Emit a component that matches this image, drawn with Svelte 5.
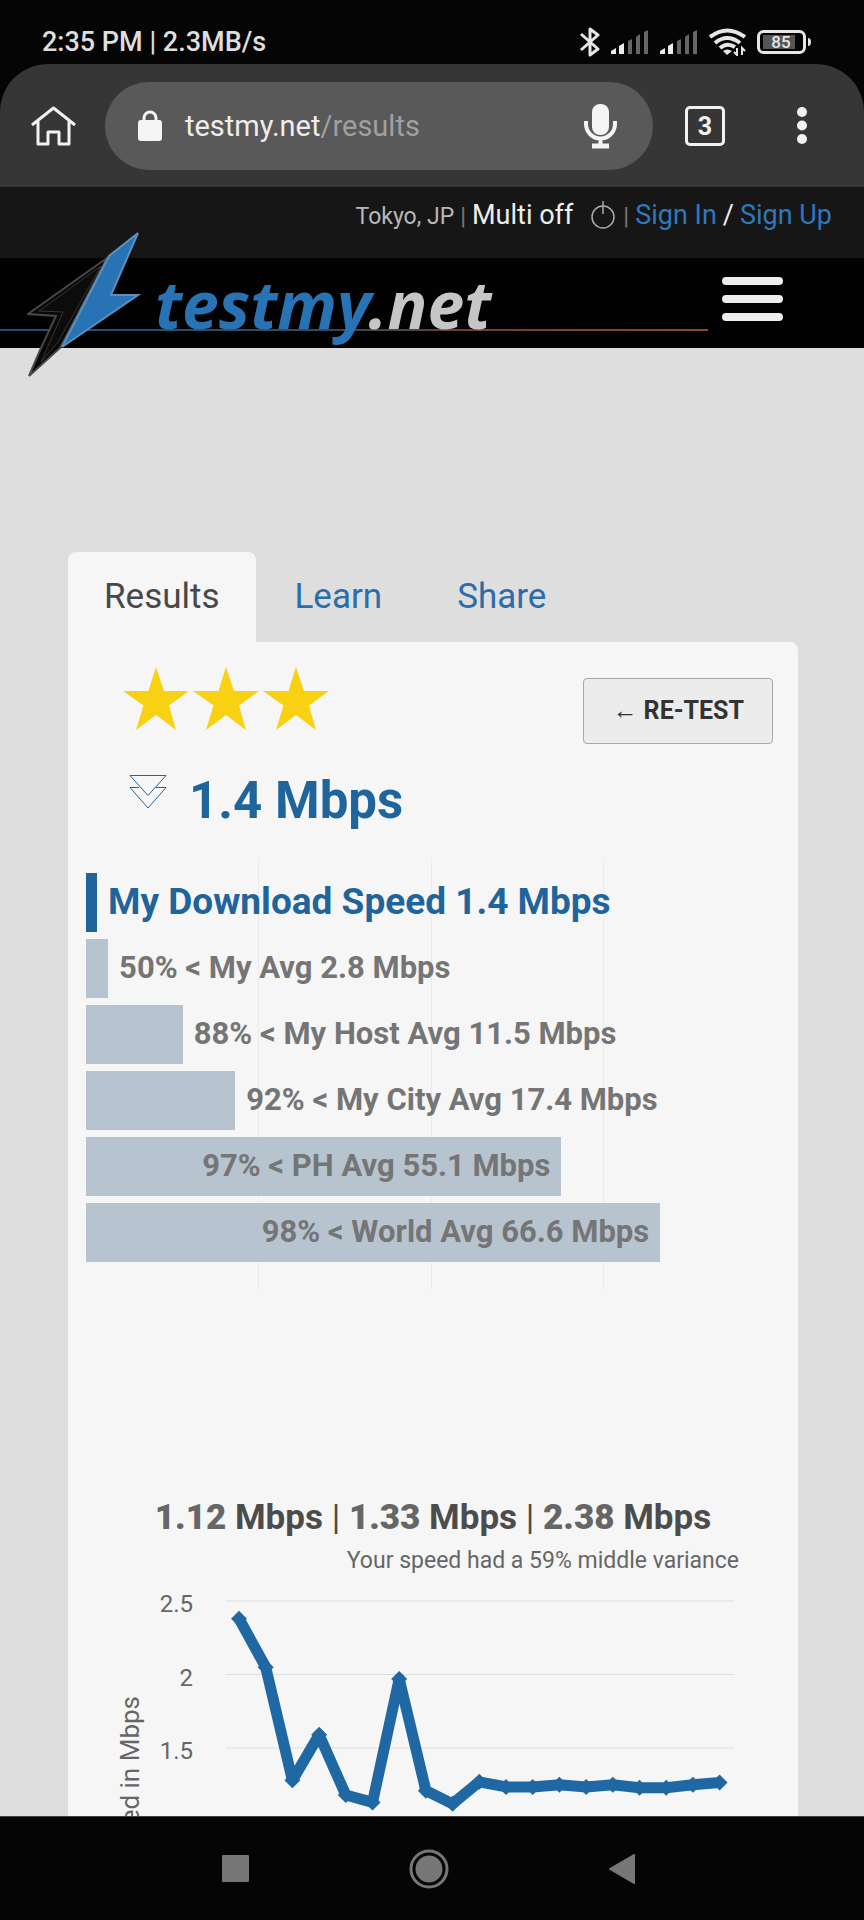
<script lang="ts">
  interface Bar {
    label: string;
    width: number;
    mine?: boolean;
    inside?: boolean;
  }

  const tabs = ['Results', 'Learn', 'Share'];
  let active = $state('Results');

  const bars: Bar[] = [
    { label: 'My Download Speed 1.4 Mbps', width: 1.6, mine: true },
    { label: '50% < My Avg 2.8 Mbps', width: 3.2 },
    { label: '88% < My Host Avg 11.5 Mbps', width: 14 },
    { label: '92% < My City Avg 17.4 Mbps', width: 21.6 },
    { label: '97% < PH Avg 55.1 Mbps', width: 68.8, inside: true },
    { label: '98% < World Avg 66.6 Mbps', width: 83.1, inside: true }
  ];

  const speeds = [
    2.38, 2.05, 1.28, 1.59, 1.18, 1.13, 1.97, 1.21, 1.12, 1.27, 1.235, 1.235, 1.25, 1.235, 1.25, 1.23, 1.23, 1.25,
    1.265
  ];
  const ticks = [2.5, 2, 1.5, 1];

  // plot coordinates inside the svg viewBox
  const px = (i: number) => 171 + i * 26.7;
  const py = (v: number) => 24 + (2.5 - v) * 147;

  const points = speeds.map((v, i) => ({ x: px(i), y: py(v) }));
  const line = points.map((p) => `${p.x},${p.y}`).join(' ');
</script>

{#snippet signal()}
  <svg width="38" height="26" viewBox="0 0 38 26" aria-hidden="true">
    <path d="M0 25V22L5 19V25ZM8 25V17L13 14V25Z" fill="#ededed" />
    <path d="M17 25V12L21 10V25ZM25 25V8L29 5V25ZM33 25V3L37 1V25Z" fill="#666" />
  </svg>
{/snippet}

<div class="phone">
  <header class="status">
    <span>2:35 PM | 2.3MB/s</span>
    <div class="status-icons">
      <svg width="20" height="32" viewBox="0 0 20 32" fill="none" stroke="#e6e6e6" stroke-width="3" aria-hidden="true">
        <path d="M1 8L18 23L10 29V3L18 9L1 24" stroke-linejoin="round" />
      </svg>
      {@render signal()}
      {@render signal()}
      <svg width="37" height="28" viewBox="0 0 37 28" fill="none" stroke="#e6e6e6" stroke-width="4" aria-hidden="true">
        <path d="M1 9Q18 -4 36 9M6 15Q18 5 31 15M11 20Q18 14 26 19" />
        <path d="M14 23Q18 20 23 23L18 27Z" fill="#e6e6e6" stroke="none" />
        <path d="M28 20V27L25 24M33 27V20L36 23" stroke-width="2" />
      </svg>
      <svg width="54" height="24" viewBox="0 0 54 24" aria-label="Battery 85%">
        <rect x="1.5" y="1.5" width="46" height="21" rx="5" fill="none" stroke="#e6e6e6" stroke-width="3" />
        <rect x="6" y="5" width="32" height="14" fill="#555" />
        <path d="M51 8Q54 8 54 12Q54 16 51 16Z" fill="#e6e6e6" />
        <text x="24" y="18" text-anchor="middle" class="charge">85</text>
      </svg>
    </div>
  </header>

  <div class="browser">
    <button class="plain" aria-label="Home">
      <svg width="45" height="40" viewBox="0 0 45 40" fill="none" stroke="#f2f2f2" stroke-width="3">
        <path d="M1 19L22.500 2L44 19M7 15V38H17V26H28V38H38V15" stroke-linejoin="round" />
      </svg>
    </button>
    <div class="omnibox">
      <svg width="24" height="32" viewBox="0 0 24 32" aria-hidden="true">
        <rect y="10" width="24" height="21" rx="3" fill="#f5f5f5" />
        <path d="M6 12V8A6 6 0 0 1 18 8V12" fill="none" stroke="#f5f5f5" stroke-width="3" />
      </svg>
      <button class="plain url">testmy.net<span>/results</span></button>
      <button class="plain" aria-label="Voice search">
        <svg width="33" height="46" viewBox="0 0 33 46" fill="none" stroke="#f5f5f5">
          <rect x="8" y="1" width="17" height="31" rx="8" fill="#f5f5f5" stroke="none" />
          <path d="M2 18V21A14.500 14.500 0 0 0 31 21V18M16.500 35V43" stroke-width="4" />
          <path d="M8 43H25" stroke-width="5" />
        </svg>
      </button>
    </div>
    <button class="count" aria-label="3 open tabs">3</button>
    <button class="plain more" aria-label="More">
      <svg width="10" height="38" viewBox="0 0 10 38" fill="#f2f2f2">
        <circle cx="5" cy="5" r="5" /><circle cx="5" cy="18.500" r="5" /><circle cx="5" cy="32" r="5" />
      </svg>
    </button>
  </div>

  <main class="site">
    <div class="account">
      <small>Tokyo, JP</small>
      <i>|</i>
      <span>Multi off</span>
      <button class="plain power" aria-label="Toggle multithread">
        <svg width="24" height="28" viewBox="0 0 24 28" fill="none" stroke="#aaa" stroke-width="1.500">
          <circle cx="12" cy="16" r="11" />
          <path d="M12 0V13" />
        </svg>
      </button>
      <i>|</i>
      <a href="#signin">Sign In</a>
      <span>/</span>
      <a href="#signup">Sign Up</a>
    </div>

    <nav class="masthead">
      <svg class="bolt" width="114" height="148" viewBox="0 0 114 148" aria-hidden="true">
        <path d="M80 28L1 84L29 86L14 118L2 146L33 118Z" fill="#080808" stroke="#484848" stroke-width="2" />
        <path d="M74 36L12 81L36 82L14 132L31 112Z" fill="#0c0c0c" stroke="#3a3434" stroke-width="1" />
        <path d="M111 3L82 26L35 117L111 65H84Z" fill="#2773b3" stroke="#5c8fbd" stroke-width="2" />
      </svg>
      <a class="logo" href="#home">testmy<span>.net</span></a>
      <button class="plain menu" aria-label="Menu">
        <span></span><span></span><span></span>
      </button>
    </nav>

    <div class="content">
      <div class="tabs" role="tablist">
        {#each tabs as tab}
          <button class="tab" role="tab" class:active={tab === active} aria-selected={tab === active} onclick={() => (active = tab)}>
            {tab}
          </button>
        {/each}
      </div>

      <section class="panel">
        <div class="head">
          <div class="stars" role="img" aria-label="3 stars">
            {#each [1, 2, 3] as n (n)}
              <svg width="66" height="63" viewBox="0 0 66 63">
                <path d="M33 0L41 24H66L46 38.500L53 63L33 48L13 63L20.500 38.500L0 24H25.500Z" fill="#f7d112" />
              </svg>
            {/each}
          </div>
          <button class="retest">← RE-TEST</button>
        </div>

        <h1>
          <svg width="38" height="36" viewBox="0 0 38 36" fill="none" stroke="#236591" stroke-width="1" aria-hidden="true">
            <path d="M1 1.500H37L19 21.500ZM10 13.500H1L19 34L37 13.500H27" />
          </svg>
          1.4 Mbps
        </h1>

        <ul class="bars">
          {#each bars as bar}
            <li class:mine={bar.mine}>
              <div class="fill" style="width: {bar.width}%">
                {#if bar.inside}{bar.label}{/if}
              </div>
              {#if !bar.inside}<span>{bar.label}</span>{/if}
            </li>
          {/each}
        </ul>

        <h2><b>1.12</b> Mbps <i>|</i> <b>1.33</b> Mbps <i>|</i> <b>2.38</b> Mbps</h2>
        <p class="variance">Your speed had a 59% middle variance</p>

        <svg class="chart" viewBox="0 0 730 420" role="img" aria-label="Speed in Mbps">
          {#each ticks as tick}
            <path d="M158 {py(tick)}H666" stroke="#dedede" stroke-width="1" />
            <text x="125" y={py(tick) + 11} text-anchor="end">{tick}</text>
          {/each}
          <text class="axis" transform="translate(71 119) rotate(-90)" text-anchor="end">Speed in Mbps</text>
          <polyline points={line} fill="none" stroke="#1f68a4" stroke-width="11" stroke-linejoin="round" />
          {#each points as p}
            <path d="M{p.x - 8} {p.y}l8 -8l8 8l-8 8z" fill="#1f68a4" />
          {/each}
        </svg>
      </section>
    </div>
  </main>

  <footer class="keys">
    <button class="plain" aria-label="Recents">
      <svg width="27" height="27" viewBox="0 0 27 27"><rect width="27" height="27" rx="1" fill="#777" /></svg>
    </button>
    <button class="plain" aria-label="Home screen">
      <svg width="40" height="40" viewBox="0 0 40 40">
        <circle cx="20" cy="20" r="18" fill="none" stroke="#777" stroke-width="3" />
        <circle cx="20" cy="20" r="13.500" fill="#777" />
      </svg>
    </button>
    <button class="plain" aria-label="Back">
      <svg width="26" height="30" viewBox="0 0 26 30"><path d="M25 1V29L1 15Z" fill="#777" stroke="#777" stroke-linejoin="round" stroke-width="2" /></svg>
    </button>
  </footer>
</div>

<style>
  :global(body) {
    margin: 0;
    background: #050505;
  }

  .phone {
    display: flex;
    flex-direction: column;
    height: 100vh;
    background: #050505;
    font-family: Roboto, 'Liberation Sans', sans-serif;
  }

  svg {
    display: block;
    flex: none;
  }

  a {
    text-decoration: none;
  }

  i {
    font-style: normal;
  }

  .plain {
    padding: 0;
    border: 0;
    background: none;
    color: inherit;
    font: inherit;
    cursor: pointer;
  }

  .status {
    display: flex;
    justify-content: space-between;
    align-items: center;
    padding: 20px 53px 0 42px;
    height: 44px;
    color: #dedede;
    font-size: 27px;
    font-weight: 500;
  }

  .status-icons {
    display: flex;
    align-items: center;
    gap: 11px;
  }

  .charge {
    fill: #e6e6e6;
    font-size: 17px;
    font-weight: 500;
  }

  .browser {
    display: flex;
    align-items: center;
    padding: 18px 57px 17px 31px;
    border-radius: 48px 48px 0 0;
    background: #363636;
  }

  .omnibox {
    display: flex;
    flex: 1;
    align-items: center;
    gap: 23px;
    height: 88px;
    margin: 0 32px 0 29px;
    padding: 0 36px 0 33px;
    border-radius: 44px;
    background: #595959;
  }

  .url {
    flex: 1;
    color: #ededed;
    font-size: 29px;
    text-align: left;
  }

  .url span {
    color: #a0a0a0;
  }

  .count {
    width: 40px;
    height: 40px;
    padding: 0;
    border: 3px solid #f2f2f2;
    border-radius: 5px;
    background: none;
    color: #f2f2f2;
    font: 700 25px Roboto, sans-serif;
  }

  .more {
    margin-left: 72px;
  }

  .site {
    flex: 1;
    min-height: 0;
    overflow: hidden;
    background: #dedede;
  }

  .account {
    display: flex;
    justify-content: flex-end;
    align-items: baseline;
    gap: 6px;
    height: 56px;
    padding: 0 32px 15px;
    background: #161616;
    color: #ededed;
    font-size: 27px;
    line-height: 56px;
  }

  .account small {
    color: #b8b8b8;
    font-size: 23px;
  }

  .account i {
    color: #777;
    font-size: 24px;
  }

  .account a {
    color: #2f78bd;
  }

  .power {
    align-self: center;
    margin: 0 2px 0 12px;
  }

  .masthead {
    position: relative;
    display: flex;
    justify-content: space-between;
    align-items: center;
    height: 90px;
    padding: 0 81px 0 155px;
    background: #020202;
  }

  .masthead::before {
    content: '';
    position: absolute;
    bottom: 17px;
    left: 0;
    width: 82%;
    height: 2px;
    background: linear-gradient(90deg, #1d5077, #34495a 50%, #6b4030 65%, #8a4a28);
  }

  .bolt {
    position: absolute;
    top: -28px;
    left: 27px;
  }

  .logo {
    position: relative;
    color: #2773b3;
    font: italic 700 66px 'Noto Sans', sans-serif;
    line-height: 86px;
  }

  .logo span {
    color: #c6c6c6;
  }

  .menu {
    display: grid;
    gap: 10px;
    width: 61px;
    margin-bottom: 8px;
  }

  .menu span {
    height: 8px;
    border-radius: 4px;
    background: #ededed;
  }

  .content {
    padding: 204px 66px 0 68px;
  }

  .tabs {
    display: flex;
    gap: 3px;
  }

  .tab {
    padding: 0 36px;
    border: 0;
    border-radius: 8px 8px 0 0;
    background: none;
    color: #2c6ca8;
    font: 35px/90px Roboto, sans-serif;
    cursor: pointer;
  }

  .tab.active {
    background: #f6f6f6;
    color: #48484c;
  }

  .panel {
    padding-top: 25px;
    border-radius: 0 8px 0 0;
    background: #f6f6f6;
  }

  .head {
    display: flex;
    justify-content: space-between;
    align-items: flex-start;
    padding: 0 25px 0 55px;
  }

  .stars {
    display: flex;
    gap: 4px;
  }

  .retest {
    height: 66px;
    margin-top: 11px;
    padding: 0 28px 2px;
    border: 1px solid #a8a8a8;
    border-radius: 4px;
    background: #ececec;
    color: #333;
    font: 700 25px Roboto, sans-serif;
    cursor: pointer;
  }

  h1 {
    display: flex;
    gap: 22px;
    margin: 27px 0;
    padding-left: 61px;
    color: #1f649b;
    font-size: 51px;
    font-weight: 700;
    line-height: 60px;
  }

  h1 svg {
    margin-top: 3px;
  }

  .bars {
    display: grid;
    gap: 7px;
    margin: 0 21px 0 18px;
    padding: 15px 0 28px;
    background: linear-gradient(
      90deg,
      transparent calc(25% - 1px),
      #ececec calc(25% - 1px) 25%,
      transparent 25% calc(50% - 1px),
      #ececec calc(50% - 1px) 50%,
      transparent 50% calc(75% - 1px),
      #ececec calc(75% - 1px) 75%,
      transparent 75%
    );
    list-style: none;
    color: #757575;
    font-size: 31px;
    font-weight: 700;
    line-height: 58px;
    white-space: nowrap;
  }

  .bars li {
    display: flex;
    gap: 11px;
    height: 59px;
  }

  .fill {
    box-sizing: border-box;
    background: #b7c4d0;
    text-align: right;
  }

  .fill:last-child {
    padding-right: 11px;
  }

  .bars .mine {
    color: #1f649b;
    font-size: 37px;
  }

  .mine .fill {
    background: #1f649b;
  }

  h2 {
    margin: 206px 0 5px;
    color: #4c4c4c;
    font-size: 35px;
    font-weight: 700;
    line-height: 44px;
    text-align: center;
  }

  h2 b {
    color: #666;
  }

  h2 i {
    font-weight: 400;
  }

  .variance {
    margin: 0;
    padding-right: 59px;
    color: #666;
    font-size: 23px;
    line-height: 32px;
    text-align: right;
  }

  .chart {
    width: 100%;
  }

  .chart text {
    fill: #666;
    font-size: 24px;
  }

  .chart .axis {
    font-size: 26px;
  }

  .keys {
    display: flex;
    justify-content: center;
    align-items: center;
    gap: 160px;
    height: 103px;
    padding-right: 8px;
    border-top: 1px solid #444;
  }
</style>
